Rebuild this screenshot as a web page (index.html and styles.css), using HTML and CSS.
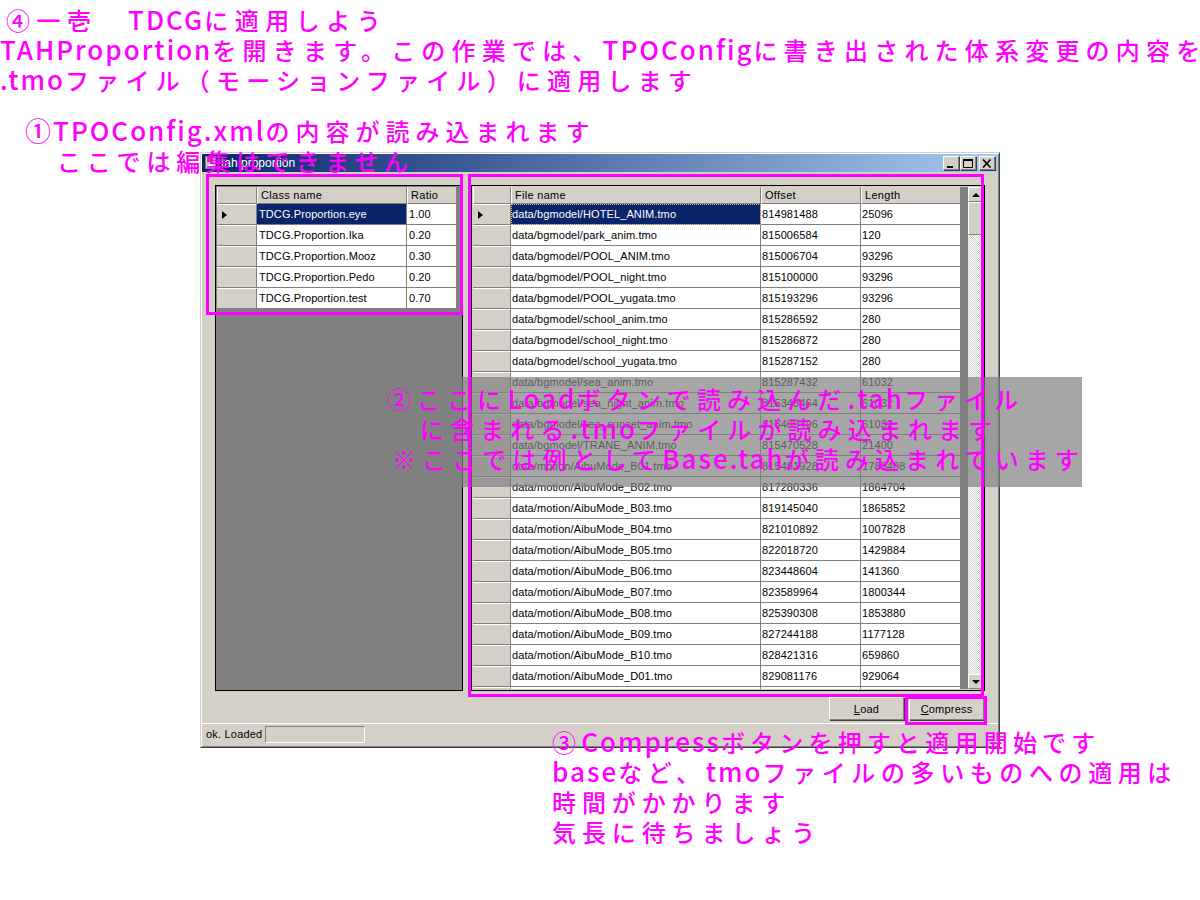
FILE: index.html
```html
<!DOCTYPE html>
<html lang="ja">
<head>
    <meta charset="UTF-8">
    <title>TDCGに適用しよう</title>
    <link rel="stylesheet" href="styles.css">
</head>
<body>
    <div id="stage">
        <div id="window">
            <div id="titlebar">
                <svg class="app-icon" width="12" height="14" viewBox="0 0 12 14">
                    <rect x="0.5" y="0.5" width="10" height="12" fill="#d4d0c8" stroke="#808080"/>
                    <rect x="2" y="2" width="6" height="4" fill="#d8402a"/>
                    <rect x="2" y="8" width="6" height="3" fill="#ffffff" stroke="#808080" stroke-width="0.5"/>
                </svg>
                <span id="title-text">tah proportion</span>
                <div id="caption-buttons">
                    <div class="caption-button">
                        <svg width="10" height="9" viewBox="0 0 10 9"><rect x="1" y="7" width="6" height="2" fill="#000"/></svg>
                    </div>
                    <div class="caption-button">
                        <svg width="10" height="9" viewBox="0 0 10 9"><path d="M0.5 1.5h9v7h-9z" fill="none" stroke="#000"/><rect x="0" y="0" width="10" height="2" fill="#000"/></svg>
                    </div>
                    <div class="caption-button close">
                        <svg width="10" height="9" viewBox="0 0 10 9"><path d="M1 0.5l7.5 8M8.5 0.5l-7.5 8" fill="none" stroke="#000" stroke-width="1.6"/></svg>
                    </div>
                </div>
            </div>
            <div id="client">
                <div id="panels">
                    <div class="grid" id="class-grid">
                        <table>
                            <colgroup><col class="col-head-left"><col class="col-class"><col class="col-ratio"></colgroup>
                            <tr><th></th><th>Class name</th><th>Ratio</th></tr>
                            <tr><th class="current"></th><td class="selected">TDCG.Proportion.eye</td><td>1.00</td></tr>
                            <tr><th></th><td>TDCG.Proportion.Ika</td><td>0.20</td></tr>
                            <tr><th></th><td>TDCG.Proportion.Mooz</td><td>0.30</td></tr>
                            <tr><th></th><td>TDCG.Proportion.Pedo</td><td>0.20</td></tr>
                            <tr><th></th><td>TDCG.Proportion.test</td><td>0.70</td></tr>
                        </table>
                    </div>
                    <div class="grid" id="file-grid">
                        <div id="file-rows">
                            <table>
                                <colgroup><col class="col-head-right"><col class="col-file"><col class="col-num"><col class="col-num"></colgroup>
                                <tr><th></th><th>File name</th><th>Offset</th><th>Length</th></tr>
                                <tr><th class="current"></th><td class="selected focused">data/bgmodel/HOTEL_ANIM.tmo</td><td>814981488</td><td>25096</td></tr>
                                <tr><th></th><td>data/bgmodel/park_anim.tmo</td><td>815006584</td><td>120</td></tr>
                                <tr><th></th><td>data/bgmodel/POOL_ANIM.tmo</td><td>815006704</td><td>93296</td></tr>
                                <tr><th></th><td>data/bgmodel/POOL_night.tmo</td><td>815100000</td><td>93296</td></tr>
                                <tr><th></th><td>data/bgmodel/POOL_yugata.tmo</td><td>815193296</td><td>93296</td></tr>
                                <tr><th></th><td>data/bgmodel/school_anim.tmo</td><td>815286592</td><td>280</td></tr>
                                <tr><th></th><td>data/bgmodel/school_night.tmo</td><td>815286872</td><td>280</td></tr>
                                <tr><th></th><td>data/bgmodel/school_yugata.tmo</td><td>815287152</td><td>280</td></tr>
                                <tr><th></th><td>data/bgmodel/sea_anim.tmo</td><td>815287432</td><td>61032</td></tr>
                                <tr><th></th><td>data/bgmodel/sea_night_anim.tmo</td><td>815348464</td><td>61032</td></tr>
                                <tr><th></th><td>data/bgmodel/sea_sunset_anim.tmo</td><td>815409496</td><td>61032</td></tr>
                                <tr><th></th><td>data/bgmodel/TRANE_ANIM.tmo</td><td>815470528</td><td>21400</td></tr>
                                <tr><th></th><td>data/motion/AibuMode_B01.tmo</td><td>815491928</td><td>1788408</td></tr>
                                <tr><th></th><td>data/motion/AibuMode_B02.tmo</td><td>817280336</td><td>1864704</td></tr>
                                <tr><th></th><td>data/motion/AibuMode_B03.tmo</td><td>819145040</td><td>1865852</td></tr>
                                <tr><th></th><td>data/motion/AibuMode_B04.tmo</td><td>821010892</td><td>1007828</td></tr>
                                <tr><th></th><td>data/motion/AibuMode_B05.tmo</td><td>822018720</td><td>1429884</td></tr>
                                <tr><th></th><td>data/motion/AibuMode_B06.tmo</td><td>823448604</td><td>141360</td></tr>
                                <tr><th></th><td>data/motion/AibuMode_B07.tmo</td><td>823589964</td><td>1800344</td></tr>
                                <tr><th></th><td>data/motion/AibuMode_B08.tmo</td><td>825390308</td><td>1853880</td></tr>
                                <tr><th></th><td>data/motion/AibuMode_B09.tmo</td><td>827244188</td><td>1177128</td></tr>
                                <tr><th></th><td>data/motion/AibuMode_B10.tmo</td><td>828421316</td><td>659860</td></tr>
                                <tr><th></th><td>data/motion/AibuMode_D01.tmo</td><td>829081176</td><td>929064</td></tr>
                                <tr><th></th><td></td><td></td><td></td></tr>
                            </table>
                        </div>
                        <div id="scrollbar">
                            <div class="scroll-button"><span class="arrow-up"></span></div>
                            <div id="scroll-thumb"></div>
                            <div id="scroll-track"></div>
                            <div class="scroll-button"><span class="arrow-down"></span></div>
                        </div>
                    </div>
                </div>
                <div id="actions">
                    <button><u>L</u>oad</button>
                    <button><u>C</u>ompress</button>
                </div>
            </div>
            <div id="statusbar">
                <span>ok. Loaded</span>
                <div id="progress"></div>
            </div>
        </div>

        <!-- annotations drawn over the screenshot -->
        <div id="shade"></div>
        <div class="mark" id="mark-class"></div>
        <div class="mark" id="mark-file"></div>
        <div class="mark" id="mark-compress"></div>

        <div class="note" id="note-intro">
            <p class="line-step">④一壱　<span class="en">TDCG</span>に適用しよう</p>
            <p class="line-open"><span class="en">TAHProportion</span>を開きます。この作業では、<span class="en">TPOConfig</span>に書き出された体系変更の内容を</p>
            <p class="line-open"><span class="en">.tmo</span>ファイル（モーションファイル）に適用します</p>
        </div>
        <div class="note" id="note-one">
            <p class="line-loaded"><span class="en">①TPOConfig.xml</span>の内容が読み込まれます</p>
            <p class="line-edit">ここでは編集はできません</p>
        </div>
        <div class="note" id="note-two">
            <p>②ここに<span class="en">Load</span>ボタンで読み込んだ<span class="en">.tah</span>ファイル</p>
            <p class="indent-two">に含まれる<span class="en">.tmo</span>ファイルが読み込まれます</p>
            <p class="indent-three">※ここでは例として<span class="en">Base.tah</span>が読み込まれています</p>
        </div>
        <div class="note" id="note-three">
            <p class="line-start">③<span class="en">Compress</span>ボタンを押すと適用開始です</p>
            <p class="line-base"><span class="en">base</span>など、<span class="en">tmo</span>ファイルの多いものへの適用は</p>
            <p>時間がかかります</p>
            <p>気長に待ちましょう</p>
        </div>
    </div>
</body>
</html>
```

FILE: styles.css
```css
* {
    box-sizing: border-box;
}
body {
    margin: 0;
    background-color: white;
    font-family: "Liberation Sans", sans-serif;
    font-size: 11px;
    color: black;
}
#stage {
    position: relative;
    width: 1200px;
    height: 900px;
    padding: 152px 0 0 200px;
    overflow: hidden;
}

/* window */
#window {
    width: 800px;
    height: 596px;
    display: flex;
    flex-direction: column;
    padding: 1px;
    background-color: #d4d0c8;
    border: 1px solid #d4d0c8;
    border-right-color: #404040;
    border-bottom-color: #404040;
    box-shadow: inset 1px 1px 0 white, inset -1px -1px 0 #808080;
}
#titlebar {
    height: 18px;
    flex: none;
    display: flex;
    align-items: center;
    padding: 0 3px 0 3px;
    background: linear-gradient(90deg, #0a246a, #a6caf0);
    color: white;
    font-size: 12px;
}
.app-icon {
    margin-right: 4px;
}
#title-text {
    flex: 1;
}
#caption-buttons {
    display: flex;
    gap: 1px;
}
.caption-button {
    width: 16px;
    height: 14px;
    display: flex;
    align-items: center;
    justify-content: center;
    background-color: #d4d0c8;
    border: 1px solid #808080;
    border-top-color: white;
    border-left-color: white;
    box-shadow: 1px 1px 0 #404040;
}
.caption-button.close {
    margin-left: 2px;
}
#client {
    flex: 1;
    display: flex;
    flex-direction: column;
    padding: 13px 13px 3px 13px;
    min-height: 0;
}
#panels {
    flex: 1;
    display: flex;
    gap: 8px;
    min-height: 0;
}

/* data grids */
.grid {
    padding: 1px;
    background-color: #808080;
    border: 1px solid black;
    overflow: hidden;
}
#class-grid {
    width: 248px;
}
#file-grid {
    width: 514px;
    display: flex;
    padding-right: 0;
    background-color: #d4d0c8;
}
#file-rows {
    flex: 1;
    overflow: hidden;
    background-color: #808080;
}
table {
    border-collapse: separate;
    border-spacing: 0;
    table-layout: fixed;
}
.col-head-left {
    width: 40px;
}
.col-head-right {
    width: 38px;
}
.col-class {
    width: 150px;
}
.col-ratio {
    width: 50px;
}
.col-file {
    width: 250px;
}
.col-num {
    width: 100px;
}
th {
    height: 21px;
    padding: 0 0 0 5px;
    background-color: #d4d0c8;
    border-top: 1px solid white;
    border-bottom: 1px solid #808080;
    border-right: 1px solid #808080;
    font-weight: normal;
    text-align: left;
    letter-spacing: 0.3px;
    white-space: nowrap;
}
tr:first-child th {
    height: 17px;
    padding-left: 3px;
    border-top: 0;
    border-left: 1px solid white;
}
td {
    height: 21px;
    padding: 0 0 0 2px;
    background-color: white;
    border-bottom: 1px solid #808080;
    border-right: 1px solid #808080;
    letter-spacing: 0.1px;
    white-space: nowrap;
    overflow: hidden;
}
#file-rows td {
    padding-left: 1px;
}
td.selected {
    background-color: #0a246a;
    color: white;
}
td.focused {
    outline: 1px dotted #d8c480;
    outline-offset: -1px;
}
.current::before {
    content: "";
    display: block;
    width: 0;
    height: 0;
    border-top: 4px solid transparent;
    border-bottom: 4px solid transparent;
    border-left: 5px solid black;
}

/* scrollbar */
#scrollbar {
    width: 16px;
    flex: none;
    display: flex;
    flex-direction: column;
}
.scroll-button, #scroll-thumb {
    background-color: #d4d0c8;
    border: 1px solid #808080;
    border-top-color: white;
    border-left-color: white;
}
.scroll-button {
    height: 15px;
    flex: none;
    display: flex;
    align-items: center;
    justify-content: center;
}
#scroll-thumb {
    height: 33px;
    flex: none;
}
#scroll-track {
    flex: 1;
    background: repeating-conic-gradient(#d4d0c8 0 25%, white 0 50%) 0 0 / 2px 2px;
}
.arrow-up, .arrow-down {
    width: 0;
    height: 0;
    border-left: 4px solid transparent;
    border-right: 4px solid transparent;
}
.arrow-up {
    border-bottom: 4px solid black;
}
.arrow-down {
    border-top: 4px solid black;
}

/* buttons and status */
#actions {
    flex: none;
    display: flex;
    justify-content: flex-end;
    gap: 5px;
    margin: 6px 1px 0 0;
}
button {
    width: 75px;
    height: 23px;
    padding: 0;
    background-color: #d4d0c8;
    border: 1px solid #808080;
    border-top-color: white;
    border-left-color: white;
    border-radius: 0;
    box-shadow: 1px 1px 0 #404040;
    font-family: inherit;
    font-size: 11px;
    letter-spacing: 0.2px;
    color: black;
}
#statusbar {
    height: 23px;
    flex: none;
    display: flex;
    align-items: center;
    gap: 3px;
    padding: 0 0 2px 4px;
    border-top: 1px solid white;
    letter-spacing: 0.2px;
}
#progress {
    width: 100px;
    height: 17px;
    border: 1px solid white;
    border-top-color: #808080;
    border-left-color: #808080;
}

/* annotations */
#shade {
    position: absolute;
    left: 380px;
    top: 377px;
    width: 702px;
    height: 110px;
    background-color: rgba(128, 128, 128, 0.7);
}
.mark {
    position: absolute;
    border: 3px solid #ff00ff;
}
#mark-class {
    left: 206px;
    top: 174px;
    width: 257px;
    height: 141px;
}
#mark-file {
    left: 468px;
    top: 174px;
    width: 516px;
    height: 523px;
}
#mark-compress {
    left: 905px;
    top: 696px;
    width: 82px;
    height: 29px;
}
.note {
    position: absolute;
    font-family: "Noto Sans CJK JP", sans-serif;
    font-size: 24px;
    font-weight: 500;
    line-height: 30px;
    color: #ff00ff;
    white-space: nowrap;
}
.note p {
    margin: 0;
}
.en {
    letter-spacing: 2px;
    font-size: 26px;
    line-height: 1;
}
#note-intro {
    left: 6px;
    top: 5px;
}
.line-step {
    letter-spacing: 6.5px;
}
.note .line-open {
    margin-left: -6px;
    letter-spacing: 6.2px;
}
#note-one {
    left: 25px;
    top: 116px;
}
.line-loaded {
    letter-spacing: 6px;
}
.note .line-edit {
    margin-left: 32px;
    letter-spacing: 5.8px;
}
#note-two {
    left: 387px;
    top: 384px;
    letter-spacing: 6.1px;
}
.note .indent-two {
    margin-left: 33px;
}
.note .indent-three {
    margin-left: 5px;
}
#note-three {
    left: 552px;
    top: 727px;
    letter-spacing: 5.9px;
}
.note .line-start {
    letter-spacing: 5.2px;
}
.note .line-base {
    letter-spacing: 5.6px;
}
```
